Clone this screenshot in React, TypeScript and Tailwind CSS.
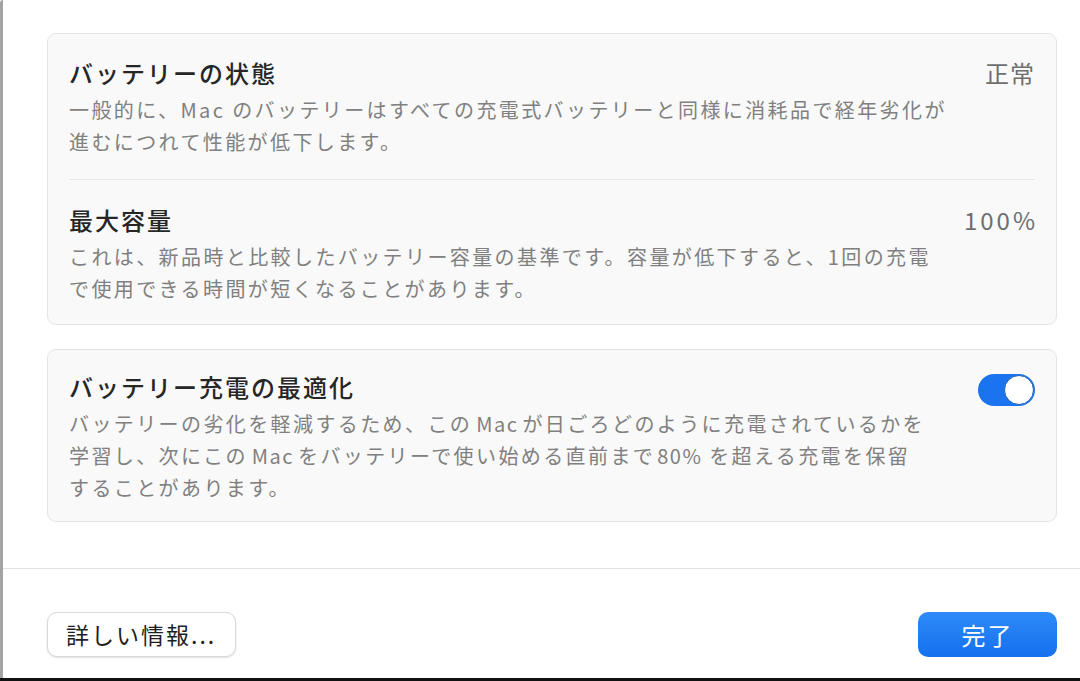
import React from "react";

const font = { fontFamily: '"Noto Sans CJK JP", "Noto Sans", sans-serif' };

function Row({
  title,
  lines,
  right,
  pt,
}: {
  title: string;
  lines: React.ReactNode[];
  right: React.ReactNode;
  pt: string;
}) {
  return (
    <div className={`flex items-start justify-between ${pt}`}>
      <div className="flex flex-col">
        <div className="text-[24px] leading-[34px] tracking-[2px] font-medium text-[#262626] whitespace-nowrap">
          {title}
        </div>
        <div className="mt-[4px] text-[20px] leading-[32px] tracking-[2.4px] text-[#808080] whitespace-nowrap">
          {lines.map((l, i) => (
            <div key={i}>{l}</div>
          ))}
        </div>
      </div>
      {right}
    </div>
  );
}

const W = ({ children }: { children: React.ReactNode }) => (
  <span className="mx-[4px] tracking-[1.5px]">{children}</span>
);

export default function App() {
  return (
    <div className="w-[1080px] h-[681px] overflow-hidden bg-white flex flex-col" style={font}>
      <div className="flex flex-1 min-h-0">
        <div className="w-[3px] bg-[#a3a3a3] rounded-tl-[3px]" />
        <div className="flex-1 flex flex-col">
          <div className="flex flex-col gap-[24px] pt-[33px] pl-[44px] pr-[23px]">
            <div className="rounded-[9px] border border-[#e4e4e4] bg-[#f9f9f9] px-[21px] pb-[19px]">
              <Row
                pt="pt-[22px]"
                title="バッテリーの状態"
                lines={[
                  "一般的に、Mac のバッテリーはすべての充電式バッテリーと同様に消耗品で経年劣化が",
                  "進むにつれて性能が低下します。",
                ]}
                right={
                  <div className="text-[24px] leading-[34px] tracking-[1px] text-[#6e6e6e] whitespace-nowrap">
                    正常
                  </div>
                }
              />
              <div className="mt-[21px] h-px bg-[#e6e6e6]" />
              <Row
                pt="pt-[23px]"
                title="最大容量"
                lines={[
                  "これは、新品時と比較したバッテリー容量の基準です。容量が低下すると、1回の充電",
                  "で使用できる時間が短くなることがあります。",
                ]}
                right={
                  <div className="text-[24px] leading-[34px] tracking-[3px] -mr-[3px] text-[#6e6e6e] whitespace-nowrap">
                    100%
                  </div>
                }
              />
            </div>
            <div className="rounded-[9px] border border-[#e4e4e4] bg-[#f9f9f9] px-[21px] pb-[17px]">
              <Row
                pt="pt-[20px]"
                title="バッテリー充電の最適化"
                lines={[
                  <>バッテリーの劣化を軽減するため、この<W>Mac</W>が日ごろどのように充電されているかを</>,
                  <>学習し、次にこの<W>Mac</W>をバッテリーで使い始める直前まで<span className="ml-[2px] tracking-[1.5px]">80%</span> を超える充電を保留</>,
                  "することがあります。",
                ]}
                right={
                  <div className="mt-[4px] w-[57px] h-[32px] rounded-full bg-[#1b74ee] flex items-center justify-end pr-[1px]">
                    <div className="w-[30px] h-[30px] rounded-full bg-white border border-[#1a5fc0]" />
                  </div>
                }
              />
            </div>
          </div>
          <div className="flex-1" />
          <div className="h-px bg-[#e2e2e2]" />
          <div className="h-[109px] flex items-start justify-between pl-[44px] pr-[23px] pt-[43px]">
            <div className="h-[45px] w-[189px] rounded-[10px] bg-white border border-[#d8d8d8] shadow-[0_1px_2px_rgba(0,0,0,0.12)] flex items-center pl-[18px] text-[23px] tracking-[2px] text-[#1f1f1f] whitespace-nowrap">
              詳しい情報...
            </div>
            <div className="h-[45px] w-[139px] rounded-[10px] bg-gradient-to-b from-[#2d8af7] to-[#1570ee] flex items-center justify-center text-[24px] tracking-[2px] text-white whitespace-nowrap">
              完了
            </div>
          </div>
        </div>
      </div>
      <div className="h-[3px] bg-[#111]" />
    </div>
  );
}
